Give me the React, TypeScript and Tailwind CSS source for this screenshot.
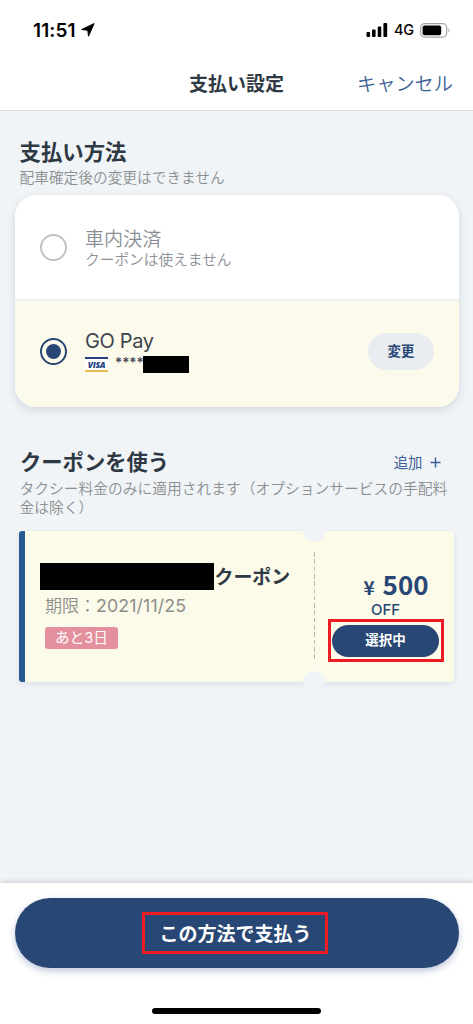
import { useState } from 'react'

type Method = 'car' | 'gopay'

function StatusBar() {
  return (
    <div className="flex h-[58px] items-center justify-between pl-[33px] pr-[22px] pt-[2px] text-black">
      <div className="flex items-center gap-[5px]">
        <span className="w-[43px] text-[19px] leading-none font-semibold tracking-[0.1px]">11:51</span>
        <svg width="14" height="14" viewBox="0 0 14 14" fill="currentColor">
          <path d="M13.1 0.6 7.5 13.2 6.8 7.3 0.7 6.5Z" stroke="currentColor" strokeWidth="1" strokeLinejoin="round" />
        </svg>
      </div>
      <div className="flex items-center">
        <svg width="22" height="14" viewBox="0 0 22 14" fill="currentColor">
          <rect x="0.5" y="9" width="3.6" height="5" rx="1" />
          <rect x="6" y="6.5" width="3.6" height="7.5" rx="1" />
          <rect x="11.7" y="3.5" width="3.6" height="10.5" rx="1" />
          <rect x="17.4" y="0" width="3.8" height="14" rx="1" />
        </svg>
        <span className="ml-[6px] w-[26px] text-[14.5px] leading-none font-medium tracking-[-0.2px]">4G</span>
        <svg width="31" height="15" viewBox="0 0 31 15">
          <rect x="0.7" y="0.7" width="26" height="13.4" rx="4" fill="none" stroke="#a3a3a3" strokeWidth="1.2" />
          <rect x="2.6" y="2.6" width="18.6" height="9.6" rx="2" fill="#000" />
          <path d="M28.4 5.2c1.4.6 1.4 3.8 0 4.4Z" fill="#a3a3a3" />
        </svg>
      </div>
    </div>
  )
}

function Radio({ checked }: { checked: boolean }) {
  return (
    <span
      className={
        checked
          ? 'flex size-[27px] shrink-0 items-center justify-center rounded-full border-[2.5px] border-[#284774]'
          : 'flex size-[27px] shrink-0 items-center justify-center rounded-full border-[2.5px] border-[#bcc2c6]'
      }
    >
      {checked && <span className="size-[15px] rounded-full bg-[#284774]" />}
    </span>
  )
}

function VisaMark() {
  return (
    <span className="flex h-[15px] w-[23px] flex-col justify-between bg-white">
      <span className="h-[2px] bg-[#283f85]" />
      <span className="text-center font-['Open_Sans'] text-[8.5px] leading-[9px] font-extrabold tracking-[-0.3px] text-[#283f85] italic">
        VISA
      </span>
      <span className="h-[2px] bg-[#ecba4c]" />
    </span>
  )
}

function Coupon() {
  return (
    <div className="relative ml-[19px] flex h-[151px] w-[435px] rounded-[4px] bg-[#fcfae9] shadow-[0_2px_5px_rgba(40,60,90,0.1)]">
      <div className="w-[6px] shrink-0 rounded-l-[3px] bg-[#285a92]" />
      <div className="w-[289px] shrink-0 pt-[32px] pl-[15px]">
        <div className="flex h-[27px] items-center">
          <span className="h-[27px] w-[174px] bg-black" />
          <span className="pt-[2px] pl-[0.5px] text-[18.9px] leading-[27px] font-bold text-[#2f3944]">クーポン</span>
        </div>
        <p className="ml-[5px] h-[24px] pt-[4px] text-[17px] leading-[24px] font-[350] text-[#8d908c]">
          期限：<span className="text-[17.8px] font-normal tracking-[0.1px]">2021/11/25</span>
        </p>
        <span className="mt-[13px] ml-[5px] flex h-[22px] w-[73px] items-center justify-center rounded-[3px] bg-[#e38f9d] text-[14.7px] leading-[22px] text-white">
          あと3日
        </span>
      </div>
      <div className="mt-[21px] h-[107px] w-px shrink-0 bg-[repeating-linear-gradient(to_bottom,#b9bab4_0_4.6px,transparent_4.6px_7.3px)]" />
      <div className="flex w-[139px] shrink-0 flex-col items-center pt-[37px] pl-[2px]">
        <p className="flex h-[33px] items-baseline gap-[8px] pl-[21px] font-['Noto_Sans_CJK_JP',sans-serif] leading-[32px] font-bold text-[#284774]">
          <span className="text-[19px]">¥</span>
          <span className="text-[26px]">500</span>
        </p>
        <p className="h-[18px] text-[15px] leading-[18px] font-medium text-[#284774]">OFF</p>
        <div className="h-[43px] w-[116px] shrink-0 border-[3px] border-[#ed1c24] py-[3px] pl-[1.5px]">
          <button className="flex h-[32px] w-[107px] items-center justify-center rounded-full bg-[#284774] text-[13.5px] leading-none font-bold text-white">
            選択中
          </button>
        </div>
      </div>
      <span className="absolute -top-[11px] left-[284px] size-[22px] rounded-full bg-[#f0f4f7]" />
      <span className="absolute -bottom-[11px] left-[284px] size-[22px] rounded-full bg-[#f0f4f7]" />
    </div>
  )
}

export default function App() {
  const [method, setMethod] = useState<Method>('gopay')

  return (
    <div className="flex h-[1024px] w-[473px] flex-col overflow-hidden bg-[#f0f4f7] font-['Inter','Noto_Sans_CJK_JP',sans-serif]">
      <header className="h-[111px] shrink-0 border-b border-[#d8dbde] bg-white">
        <StatusBar />
        <div className="grid h-[50px] grid-cols-[1fr_auto_1fr] items-center pt-[4px]">
          <span />
          <h1 className="text-[19px] font-bold text-[#2f3944]">支払い設定</h1>
          <button className="justify-self-end pr-[20px] pb-[2px] text-[19.2px] font-[350] text-[#3d5f95]">
            キャンセル
          </button>
        </div>
      </header>

      <main className="flex-1">
        <section className="pt-[26px]">
          <h2 className="pl-[19.5px] text-[21.4px] leading-[30px] font-bold text-[#2f3944]">支払い方法</h2>
          <p className="h-[28px] pl-[19.5px] text-[14.7px] leading-[23px] font-[350] text-[#8b8f92]">
            配車確定後の変更はできません
          </p>
          <div className="mx-[14.5px] h-[212px] overflow-hidden rounded-[21px] bg-white shadow-[0_3px_9px_rgba(40,55,80,0.15)]">
            <div
              onClick={() => setMethod('car')}
              className="flex h-[106px] items-center gap-[18.5px] border-b-2 border-[#eef0f0] pl-[25px]"
            >
              <Radio checked={method === 'car'} />
              <div className="pt-[3px] font-[350] text-[#8b8f95]">
                <p className="text-[19.1px] leading-[22px]">車内決済</p>
                <p className="text-[14.7px] leading-[20px]">クーポンは使えません</p>
              </div>
            </div>
            <div
              onClick={() => setMethod('gopay')}
              className="flex h-[106px] items-center bg-[#fcfaeb] pr-[24.5px] pb-[5px] pl-[25px]"
            >
              <Radio checked={method === 'gopay'} />
              <div className="ml-[18.5px] flex-1 text-[#3c444d]">
                <p className="text-[20px] leading-[25px] tracking-[-0.35px]">GO Pay</p>
                <div className="flex h-[20px] items-center">
                  <VisaMark />
                  <span className="ml-[7px] w-[27.5px] text-[13.8px] leading-none font-medium">****</span>
                  <span className="h-[17px] w-[46px] bg-black" />
                </div>
              </div>
              <button className="h-[37px] w-[66px] rounded-full bg-[#e9edf2] text-[13.4px] leading-none font-bold text-[#284774]">
                変更
              </button>
            </div>
          </div>
        </section>

        <section className="pt-[39px]">
          <div className="flex h-[32px] items-center justify-between pr-[32.5px] pl-[20px]">
            <h2 className="text-[21.3px] leading-[30px] font-bold text-[#2f3944]">クーポンを使う</h2>
            <button className="flex items-center gap-[7px] pt-[2px] text-[14.4px] text-[#3d5f95]">
              追加
              <svg width="11" height="11" viewBox="0 0 11 11" stroke="currentColor" strokeWidth="1.5">
                <path d="M5.5 0.5v10M0.5 5.5h10" />
              </svg>
            </button>
          </div>
          <p className="mb-[13px] ml-[19.5px] w-[432px] pt-[2px] text-[14.75px] leading-[19px] font-[350] text-[#8b8f92]">
            タクシー料金のみに適用されます（オプションサービスの手配料金は除く）
          </p>
          <Coupon />
        </section>
      </main>

      <footer className="flex h-[141px] shrink-0 flex-col items-center bg-white pt-[15px] shadow-[0_-1px_5px_rgba(40,50,60,0.2)]">
        <button className="flex h-[70px] w-[444px] items-center justify-center rounded-full bg-[#284774] shadow-[0_3px_7px_rgba(40,71,130,0.3)]">
          <span className="mr-[4px] flex h-[42px] w-[186px] items-center justify-center border-[3.5px] border-[#ed1c24] pt-[2px] pl-[2px] text-[19px] leading-none font-bold text-white">
            この方法で支払う
          </span>
        </button>
        <span className="mt-[40px] h-[6px] w-[169px] rounded-full bg-black" />
      </footer>
    </div>
  )
}
